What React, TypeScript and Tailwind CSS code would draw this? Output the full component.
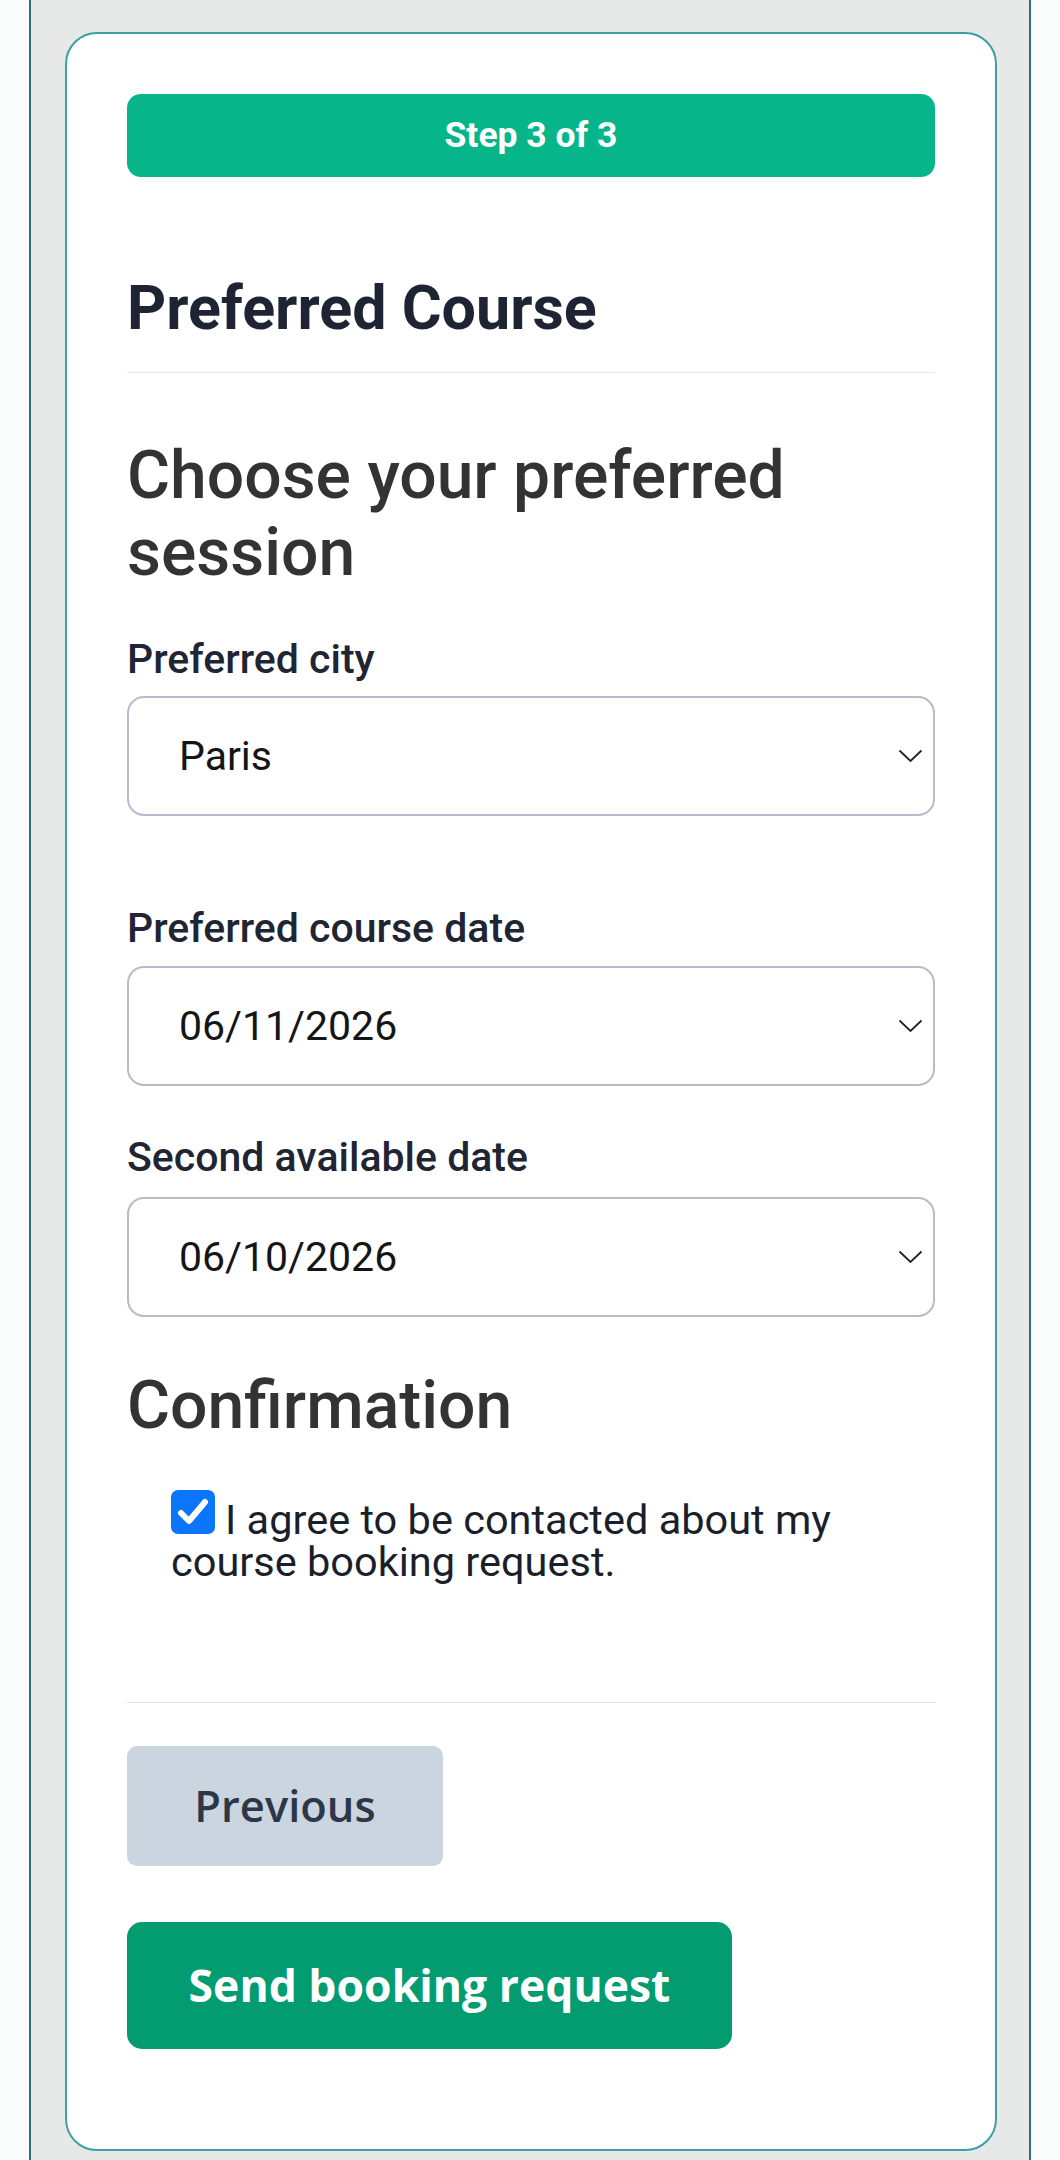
import React from "react";

const roboto = { fontFamily: "Roboto, 'Noto Sans', sans-serif" };
const btnFont = { fontFamily: "'Open Sans', 'Noto Sans', sans-serif" };

function Chevron() {
  return (
    <svg width="25" height="14" viewBox="0 0 25 14" fill="none">
      <polyline points="1.5,1.5 12.5,12 23.5,1.5" stroke="#222" strokeWidth="1.8" />
    </svg>
  );
}

function SelectBox({ value, className = "" }: { value: string; className?: string }) {
  return (
    <div
      className={`flex h-[120px] items-center justify-between rounded-[17px] border-2 border-[#babaca] bg-white pl-[50px] pr-[10px] ${className}`}
    >
      <span className="text-[41px] leading-[48px] text-[#151515]">{value}</span>
      <Chevron />
    </div>
  );
}

function FieldLabel({ children, className = "" }: { children: React.ReactNode; className?: string }) {
  return (
    <div className={`text-[41px] font-medium leading-[45px] text-[#1f2533] ${className}`}>{children}</div>
  );
}

export default function App() {
  return (
    <div className="min-h-[2160px] w-[1060px] bg-[#fbfcfc]" style={roboto}>
      <div className="ml-[29px] min-h-[2160px] w-[1002px] border-x-2 border-[#2f717a] bg-[#e7e9e9] pl-[34px] pr-[32px] pt-[32px]">
        <div className="rounded-[32px] border-2 border-[#3b9fa5] bg-white px-[60px] pb-[100px] pt-[60px]">
          {/* step indicator */}
          <div className="flex h-[83px] items-center justify-center rounded-[14px] bg-[#06b68a] text-[35.5px] font-bold text-white">
            Step 3 of 3
          </div>

          <h2 className="mt-[94px] text-[61px] font-bold leading-[74px] text-[#1e2433]">Preferred Course</h2>
          <div className="mt-[27px] h-px bg-[#e3e4ee]" />

          <h3 className="mt-[64px] text-[66px] font-medium leading-[77px] text-[#333333]">
            Choose your preferred session
          </h3>

          <FieldLabel className="mt-[46px]">Preferred city</FieldLabel>
          <SelectBox value="Paris" className="mt-[14px]" />

          <FieldLabel className="mt-[90px]">Preferred course date</FieldLabel>
          <SelectBox value="06/11/2026" className="mt-[15px]" />

          <FieldLabel className="mt-[49px]">Second available date</FieldLabel>
          <SelectBox value="06/10/2026" className="mt-[17px]" />

          <h3 className="mt-[50px] text-[66px] font-medium leading-[77px] text-[#333333]">Confirmation</h3>

          <label className="mt-[46px] block pl-[44px] text-[41.5px] leading-[42px] text-[#1a1f2b]">
            <span className="mr-[10px] inline-block h-[44px] w-[44px] overflow-hidden rounded-[7px] bg-[#0b75fb] align-baseline">
              <svg width="44" height="44" viewBox="0 0 44 44" fill="none">
                <polyline
                  points="10,23 18,31 34,12"
                  stroke="white"
                  strokeWidth="6"
                  strokeLinecap="round"
                  strokeLinejoin="round"
                />
              </svg>
            </span>
            I agree to be contacted about my course booking request.
          </label>

          <div className="mt-[119px] h-px bg-[#e2e3e8]" />

          <button
            className="mt-[43px] flex h-[120px] w-[316px] items-center justify-center rounded-[10px] bg-[#cad5e0] text-[43.5px] font-semibold text-[#2d3748]"
            style={btnFont}
          >
            Previous
          </button>

          <button
            className="mt-[56px] flex h-[127px] w-[605px] items-center justify-center rounded-[15px] bg-[#039b70] text-[44.5px] font-bold text-white"
            style={btnFont}
          >
            Send booking request
          </button>
        </div>
      </div>
    </div>
  );
}
